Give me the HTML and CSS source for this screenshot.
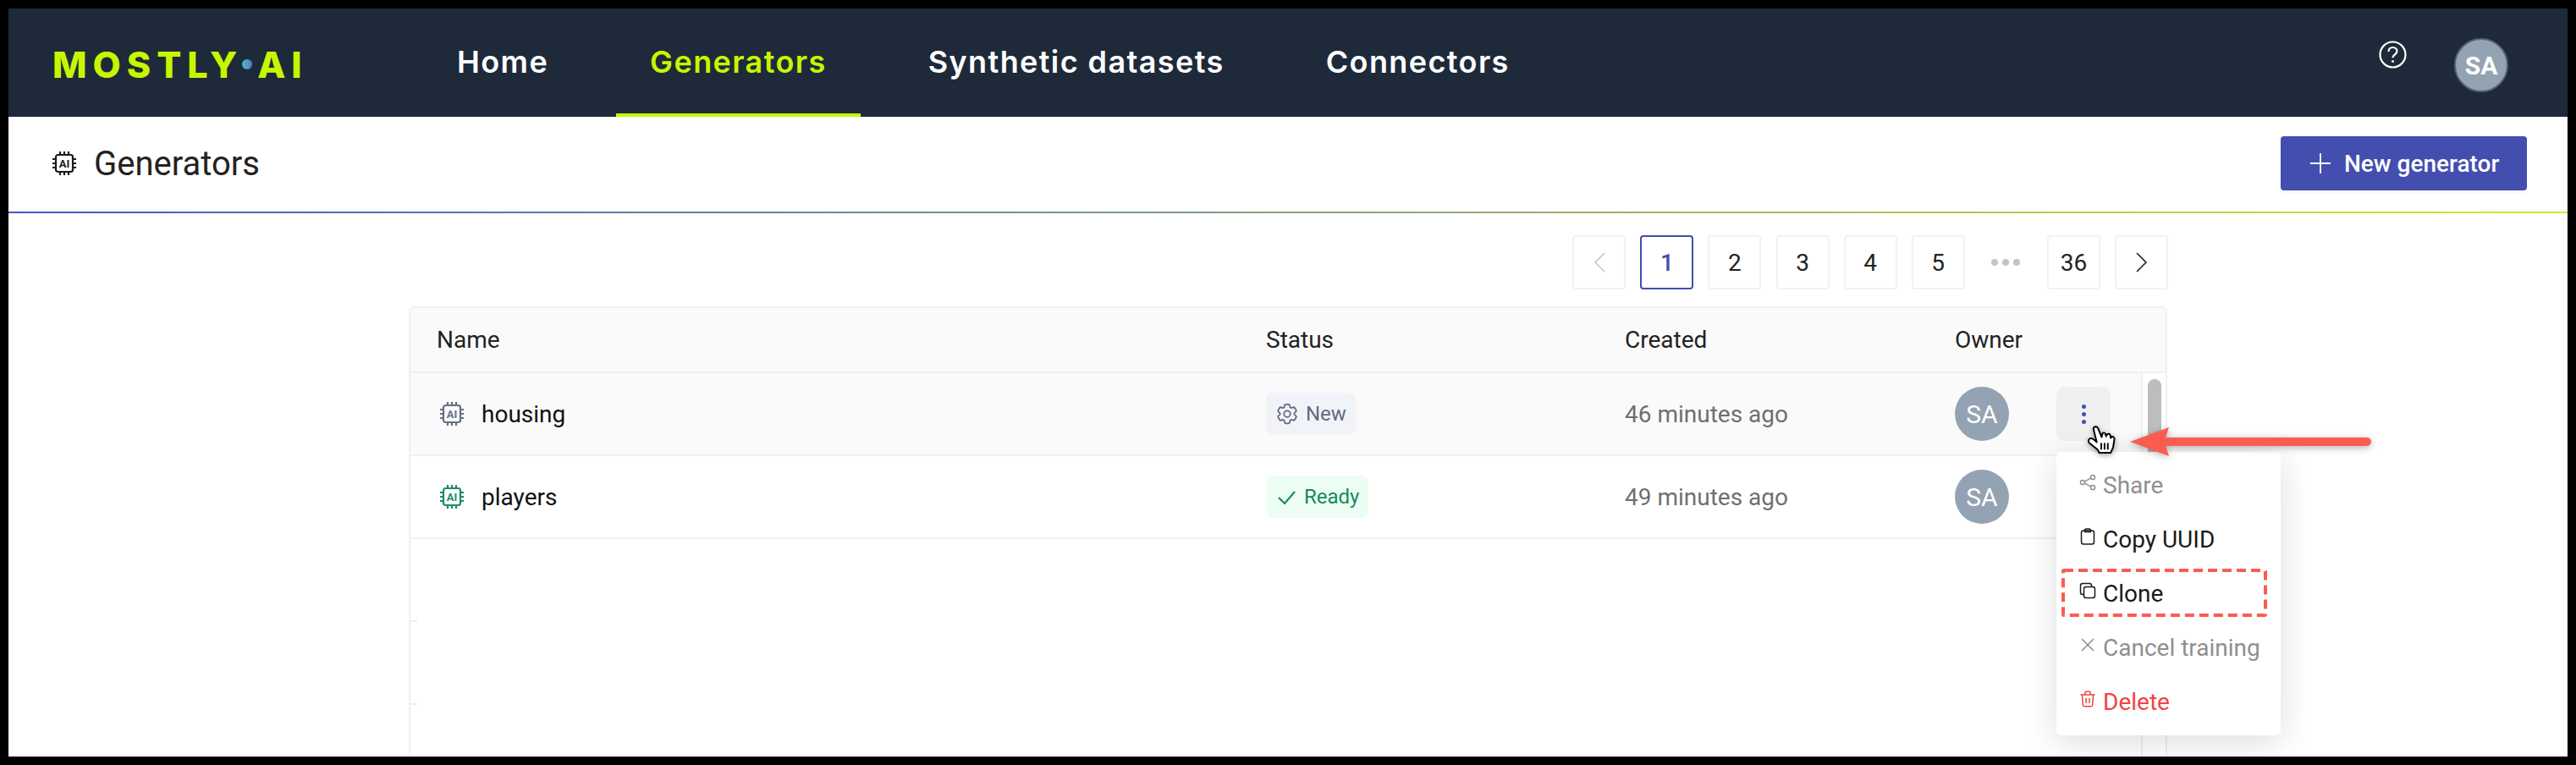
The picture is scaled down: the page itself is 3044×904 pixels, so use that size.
FILE: index.html

```html
<!DOCTYPE html>
<html lang="en">
<head>
  <meta charset="UTF-8" />
  <title>Generators</title>
  <meta name="viewport" content="width=device-width, initial-scale=1" />
  <link rel="stylesheet" href="styles.css">
</head>
<body>
  <div class="page">
    <nav class="topbar">
      <div class="logo">MOSTLY<span class="logo-dot"></span>AI</div>
      <div class="tabs">
        <a class="tab">Home</a>
        <a class="tab active">Generators</a>
        <a class="tab">Synthetic datasets</a>
        <a class="tab">Connectors</a>
      </div>
      <div class="topbar-right">
        <svg class="help" viewBox="0 0 33 33">
          <circle cx="16.5" cy="16.5" r="15" fill="none" stroke="#fff" stroke-width="2.2" />
          <path d="M11.5 13c0-3 2.2-5 5-5s5 2 5 4.6c0 3.6-5 3.8-5 7.6" fill="none" stroke="#fff" stroke-width="2.2" />
          <circle cx="16.5" cy="24.6" r="1.5" fill="#fff" />
        </svg>
        <div class="avatar avatar-top">SA</div>
      </div>
    </nav>

    <header class="page-head">
      <h1>
        <svg class="chip head-icon" viewBox="0 0 28 30">
          <rect x="4" y="5" width="20" height="20" rx="2.5" />
          <path d="M9 1v3M14 1v3M19 1v3M9 26v3M14 26v3M19 26v3M0 10h3M0 15h3M0 20h3M25 10h3M25 15h3M25 20h3" />
          <text x="14" y="19.800">AI</text>
        </svg>
        Generators
      </h1>
      <button class="btn-new">
        <svg class="plus" viewBox="0 0 24 24"><path d="M12 0v24M0 12h24" stroke="#fff" stroke-width="1.8" /></svg>
        New generator
      </button>
    </header>

    <main class="content">
      <div class="pager">
        <span class="pg muted">
          <svg class="chev" viewBox="0 0 14 24"><path d="M13 1L2 12l11 11" fill="none" stroke="currentColor" stroke-width="1.6" /></svg>
        </span>
        <span class="pg current">1</span>
        <span class="pg">2</span>
        <span class="pg">3</span>
        <span class="pg">4</span>
        <span class="pg">5</span>
        <span class="pg-dots"><i></i><i></i><i></i></span>
        <span class="pg">36</span>
        <span class="pg">
          <svg class="chev" viewBox="0 0 14 24"><path d="M1 1l11 11L1 23" fill="none" stroke="currentColor" stroke-width="1.6" /></svg>
        </span>
      </div>

      <div class="table">
        <div class="row thead">
          <div>Name</div>
          <div>Status</div>
          <div>Created</div>
          <div>Owner</div>
        </div>
        <div class="tbody">
          <div class="rows">
            <div class="row hover">
              <div class="name">
                <svg class="chip grey" viewBox="0 0 28 30">
                  <rect x="4" y="5" width="20" height="20" rx="2.5" />
                  <path d="M9 1v3M14 1v3M19 1v3M9 26v3M14 26v3M19 26v3M0 10h3M0 15h3M0 20h3M25 10h3M25 15h3M25 20h3" />
                  <text x="14" y="19.800">AI</text>
                </svg>
                housing
              </div>
              <div>
                <span class="badge new">
                  <svg class="gear" viewBox="0 0 24 24">
                    <path d="M9.594 3.94c.09-.542.56-.94 1.11-.94h2.593c.55 0 1.02.398 1.11.94l.213 1.281c.063.374.313.686.645.87.074.04.147.083.22.127.325.196.72.257 1.075.124l1.217-.456a1.125 1.125 0 011.37.49l1.296 2.247a1.125 1.125 0 01-.26 1.431l-1.003.827c-.293.24-.438.613-.431.992a6.759 6.759 0 010 .255c-.007.378.138.75.43.99l1.005.828c.424.35.534.954.26 1.43l-1.298 2.247a1.125 1.125 0 01-1.369.491l-1.217-.456c-.355-.133-.75-.072-1.076.124a6.57 6.57 0 01-.22.128c-.331.183-.581.495-.644.869l-.213 1.28c-.09.543-.56.941-1.11.941h-2.594c-.55 0-1.02-.398-1.11-.94l-.213-1.281c-.062-.374-.312-.686-.644-.87a6.52 6.52 0 01-.22-.127c-.325-.196-.72-.257-1.076-.124l-1.217.456a1.125 1.125 0 01-1.369-.49l-1.297-2.247a1.125 1.125 0 01.26-1.431l1.004-.827c.292-.24.437-.613.43-.992a6.932 6.932 0 010-.255c.007-.378-.138-.75-.43-.99l-1.004-.828a1.125 1.125 0 01-.26-1.43l1.297-2.247a1.125 1.125 0 011.37-.491l1.216.456c.356.133.751.072 1.076-.124.072-.044.146-.087.22-.128.332-.183.582-.495.644-.869l.214-1.281z" />
                    <circle cx="12" cy="12" r="3" />
                  </svg>
                  New
                </span>
              </div>
              <div class="when">46 minutes ago</div>
              <div class="owner">
                <div class="avatar">SA</div>
                <div class="kebab"><i></i><i></i><i></i></div>
              </div>
            </div>
            <div class="row">
              <div class="name">
                <svg class="chip green" viewBox="0 0 28 30">
                  <rect x="4" y="5" width="20" height="20" rx="2.5" />
                  <path d="M9 1v3M14 1v3M19 1v3M9 26v3M14 26v3M19 26v3M0 10h3M0 15h3M0 20h3M25 10h3M25 15h3M25 20h3" />
                  <text x="14" y="19.800">AI</text>
                </svg>
                players
              </div>
              <div>
                <span class="badge ready">
                  <svg class="check" viewBox="0 0 24 24"><path d="M3 13l7 7L22 6" fill="none" stroke="currentColor" stroke-width="2.2" /></svg>
                  Ready
                </span>
              </div>
              <div class="when">49 minutes ago</div>
              <div class="owner"><div class="avatar">SA</div></div>
            </div>
            <div class="blank"><span></span></div>
            <div class="blank"><span></span></div>
          </div>
          <div class="scroll"><div class="thumb"></div></div>
        </div>
      </div>
    </main>

    <div class="menu">
      <div class="item off">
        <svg viewBox="0 0 20 20"><circle cx="4" cy="10" r="2.6" /><circle cx="16" cy="4" r="2.6" /><circle cx="16" cy="16" r="2.6" /><path d="M6.4 8.8l7.2-3.6M6.4 11.2l7.2 3.6" /></svg>
        Share
      </div>
      <div class="item">
        <svg viewBox="0 0 20 20"><rect x="2.5" y="3" width="15" height="16" rx="2.5" /><path d="M6.5 3c0-1.5 1-2 2-2h3c1 0 2 .5 2 2v1.5h-7z" /></svg>
        Copy UUID
      </div>
      <div class="item">
        <svg viewBox="0 0 20 20"><rect x="5.5" y="5.5" width="13" height="13" rx="2.5" /><path d="M5.5 14.5H4c-1.5 0-2.5-1-2.5-2.5V4C1.500 2.500 2.500 1.500 4 1.500h8c1.500 0 2.500 1 2.500 2.500v1.500" /></svg>
        Clone
      </div>
      <div class="item off">
        <svg viewBox="0 0 20 20"><path d="M3 3l14 14M17 3L3 17" /></svg>
        Cancel training
      </div>
      <div class="item danger">
        <svg viewBox="0 0 20 20"><path d="M1.500 5h17M7 5V2.500c0-.8.500-1.200 1.200-1.200h3.600c.7 0 1.200.4 1.200 1.200V5M3.500 5l.8 12c.1 1 .9 1.700 1.900 1.700h7.600c1 0 1.800-.7 1.900-1.700l.8-12M8 9v6M12 9v6" /></svg>
        Delete
      </div>
    </div>

    <svg class="clone-mark" viewBox="0 0 243 57">
      <rect x="2" y="2" width="239" height="53" rx="1" />
    </svg>

    <svg class="arrow" viewBox="0 0 300 48">
      <path d="M284 19H46L50 7 4 24l46 17-4-12h238a5 5 0 0 0 0-10z" fill="#f95d50" />
    </svg>

    <svg class="cursor" viewBox="0 0 34 36">
      <path d="M7 4C7 1 11 0 12.500 3L17 14l1-4.500c1-1.500 3-1 3.500.5l1 3 1-2.500c1.500-1 3.500-.5 4 1l.5 3.500 1-1.500c2-.5 3.500.5 3.500 2.500L31 26l-3 7H14l-2-4-10-8c-2-2-1-5 1-5.500s4 .5 8 4.500z" fill="#fff" stroke="#000" stroke-width="2" stroke-linejoin="round" />
      <path d="M16.500 21v8M20.500 21v8M24.500 21v8" stroke="#000" stroke-width="2" fill="none" />
    </svg>
  </div>
</body>
</html>
```

FILE: styles.css

```css
* { box-sizing: border-box; }
html, body { margin: 0; height: 100%; }
body { background: #000; padding: 10px; font-family: 'Roboto', sans-serif; color: #1a1a1a; overflow: hidden; }

.page { position: relative; width: 3024px; height: 884px; background: #fff; overflow: hidden; }

/* top bar */
.topbar { display: flex; height: 128px; background: #1e2a3a; color: #fff; padding-left: 52px; }
.logo { width: 438px; padding-top: 41px; font-family: 'Inter', sans-serif; font-weight: 800; font-size: 43px; line-height: 50px; letter-spacing: 7px; color: #c8f500; white-space: nowrap; }
.logo-dot { display: inline-block; width: 12px; height: 12px; margin: 0 6px 9px -1px; border-radius: 50%; background: linear-gradient(90deg, #3fc7a8, #5a6fe8); vertical-align: middle; }
.tabs { display: flex; gap: 40px; }
.tab { display: flex; align-items: center; padding: 2px 40px 0; font-family: 'Inter', sans-serif; font-size: 36px; font-weight: 600; letter-spacing: 1.400px; border-bottom: 4px solid transparent; white-space: nowrap; }
.tab.active { color: #c8f500; border-bottom-color: #c8f500; }
.topbar-right { display: flex; align-items: flex-start; margin-left: auto; padding: 35px 70px 0 0; gap: 56px; }
.help { width: 33px; height: 33px; margin-top: 3px; }

.avatar { display: flex; align-items: center; justify-content: center; width: 64px; height: 64px; border-radius: 50%; background: #94a3b3; color: #fff; font-size: 30px; }
.avatar-top { border: 2px solid #52607a; font-weight: 700; }

/* page header */
.page-head { display: flex; align-items: center; justify-content: space-between; height: 114px; padding: 0 48px 2px 52px; border-bottom: 2px solid; border-image: linear-gradient(90deg, #4656c8, #c8ee32) 1; }
h1 { display: flex; align-items: center; margin: 0; font-size: 40px; font-weight: 400; color: #222; }
.chip { width: 28px; height: 30px; fill: none; stroke: currentColor; stroke-width: 2.2; }
.chip text { font-family: 'Roboto', sans-serif; font-size: 13px; font-weight: 700; fill: currentColor; stroke: none; text-anchor: middle; }
.head-icon { margin-right: 21px; color: #1a1a1a; }
.btn-new { display: flex; align-items: center; height: 64px; width: 291px; padding: 0 0 0 35px; border: 0; border-radius: 4px; background: #434eae; color: #fff; font-family: 'Roboto', sans-serif; font-size: 28px; font-weight: 500; box-shadow: 0 3px 2px rgba(0,0,0,0.03); }
.plus { width: 24px; height: 24px; margin-right: 16px; }

/* pagination */
.content { display: flex; flex-direction: column; align-items: flex-end; padding: 26px 473px 0 473px; }
.pager { display: flex; gap: 17.100px; margin: 0 -1px 20px 0; }
.pg, .pg-dots { display: flex; align-items: center; justify-content: center; width: 63px; height: 64px; font-size: 28px; color: #222; }
.pg { border: 2px solid #f2f2f2; border-radius: 4px; }
.pg.muted { color: #c4c4c4; }
.pg.current { border-color: #434eae; color: #434eae; font-weight: 500; }
.pg-dots { gap: 5px; }
.pg-dots i { width: 8px; height: 8px; border-radius: 50%; background: #c4c4c4; }
.chev { width: 14px; height: 24px; }

/* table */
.table { width: 100%; border: solid #f0f0f0; border-width: 2px 2px 0 2px; border-radius: 8px 8px 0 0; font-size: 28px; }
.row { display: grid; grid-template-columns: 980px 424px 390px 1fr; align-items: center; height: 98px; padding-left: 31px; border-bottom: 2px solid #f0f0f0; }
.thead { height: 77px; background: #fafafa; color: #222; border-radius: 8px 8px 0 0; }
.tbody { display: flex; height: 480px; }
.rows { width: 2047px; border-right: 2px solid #efefef; }
.hover { background: #fafafa; }
.name { display: flex; align-items: center; color: #111; }
.name .chip { margin: 0 21px 0 4px; }
.chip.grey { color: #667085; }
.chip.green { color: #1f8a64; }
.badge { display: inline-flex; align-items: center; height: 50px; padding: 0 11px 0 10px; border-radius: 8px; font-size: 24px; vertical-align: middle; }
.gear { width: 30px; height: 30px; margin-right: 7px; fill: none; stroke: currentColor; stroke-width: 1.4; }
.check { width: 24px; height: 24px; margin: 0 9px 0 2px; }
.badge.new { background: #f1f3f8; color: #616a80; }
.badge.ready { background: #ecfdf3; color: #168a5e; }
.when { color: #6f6f6f; }
.owner { display: flex; align-items: center; gap: 56px; }
.kebab { display: flex; flex-direction: column; align-items: center; justify-content: center; gap: 4px; width: 64px; height: 64px; border-radius: 10px; background: #f0f0f0; }
.kebab i { width: 5px; height: 5px; border-radius: 50%; background: #434eae; }
.blank { display: flex; align-items: flex-end; height: 98px; }
.blank span { width: 8px; height: 2px; background: #efefef; }
.scroll { flex: 1; padding: 7px 5px 0 6px; }
.thumb { height: 100px; border-radius: 8px; background: #bdbdbd; }

/* overlays: dropdown, annotation, pointer */
.menu { position: absolute; left: 2420px; top: 524px; width: 265px; height: 335px; padding: 7px 0; background: #fff; border-radius: 6px; box-shadow: 0 8px 40px rgba(0,0,0,0.14); }
.item { display: flex; align-items: center; height: 64px; padding-left: 27px; font-size: 28px; color: #1a1a1a; }
.item svg { width: 20px; height: 20px; margin: -6px 8px 0 0; fill: none; stroke: currentColor; stroke-width: 1.500; }
.item.off { color: #8f8f8f; }
.item.danger { color: #ef4444; }
.clone-mark { position: absolute; left: 2426px; top: 662px; width: 243px; height: 57px; fill: none; stroke: #f95d50; stroke-width: 4; stroke-dasharray: 11 6; }
.arrow { position: absolute; left: 2503px; top: 488px; width: 300px; height: 48px; filter: drop-shadow(0 2px 4px rgba(0,0,0,0.3)); }
.cursor { position: absolute; left: 2457px; top: 493px; width: 33px; height: 35px; filter: drop-shadow(0 2px 3px rgba(0,0,0,0.35)); }
```
